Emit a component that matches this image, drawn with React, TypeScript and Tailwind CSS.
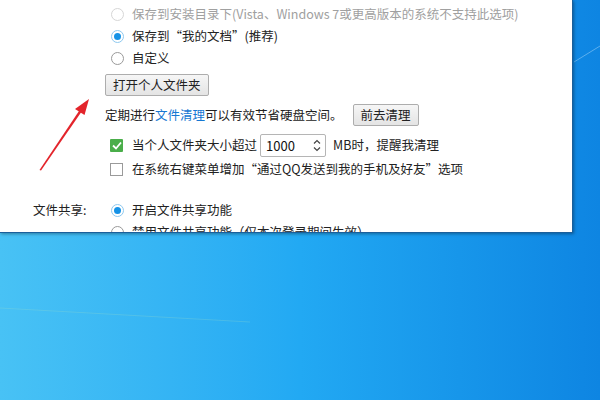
import React from "react";

const font = { fontFamily: '"Noto Sans CJK SC", "Noto Sans", sans-serif' };

function Radio({ checked, disabled }: { checked?: boolean; disabled?: boolean }) {
  return (
    <span
      className={`flex h-[13px] w-[13px] shrink-0 items-center justify-center rounded-full border bg-white ${
        disabled ? "border-[#d6d6d6]" : checked ? "border-[#8ec9ef]" : "border-[#9a9a9a]"
      }`}
    >
      {checked && <span className="h-[7px] w-[7px] rounded-full bg-[#1592e6]" />}
    </span>
  );
}

function Checkbox({ checked }: { checked?: boolean }) {
  if (checked) {
    return (
      <span className="flex h-[13px] w-[13px] shrink-0 items-center justify-center rounded-[1px] bg-[#4aae4a]">
        <svg width="10" height="9" viewBox="0 0 10 9">
          <path d="M1 4.5 L4 7.5 L9 1.5" fill="none" stroke="#fff" strokeWidth="1.8" />
        </svg>
      </span>
    );
  }
  return <span className="h-[13px] w-[13px] shrink-0 border border-[#9a9a9a] bg-white" />;
}

function Btn({ children }: { children: React.ReactNode }) {
  return (
    <button className="h-[22px] rounded-[2px] border border-[#adadad] bg-gradient-to-b from-[#f6f6f6] to-[#e4e4e4] px-[7px] text-[12.5px] leading-none text-[#222]">
      {children}
    </button>
  );
}

function Spinner() {
  return (
    <div className="mx-[3px] flex h-[23px] w-[66px] items-center justify-between rounded-[2px] border border-[#b5b5b5] bg-white pl-[5px] pr-[4px]">
      <span className="text-[13px] text-[#111]">1000</span>
      <svg width="8" height="13" viewBox="0 0 8 13">
        <path d="M1 4.5 L4 1.5 L7 4.5" fill="none" stroke="#444" strokeWidth="1.2" />
        <path d="M1 8.5 L4 11.5 L7 8.5" fill="none" stroke="#444" strokeWidth="1.2" />
      </svg>
    </div>
  );
}

export default function App() {
  return (
    <div
      className="relative h-[400px] w-[600px] overflow-hidden bg-gradient-to-r from-[#48c2f5] via-[#22a9f3] to-[#0e85e2]"
      style={font}
    >
      {/* faint desktop streaks */}
      <svg className="absolute left-0 top-0" width="600" height="400">
        <line x1="0" y1="308" x2="250" y2="322" stroke="#9fe0c8" strokeOpacity="0.25" strokeWidth="1" />
        <line x1="574" y1="62" x2="600" y2="46" stroke="#cfeaff" strokeOpacity="0.4" strokeWidth="1" />
      </svg>

      <div className="relative h-[233px] w-[573px] overflow-hidden border-b border-r border-[#1a5f9c] bg-white text-[12.5px] text-[#222] shadow-[1px_1px_3px_rgba(0,0,0,0.35)]">
        <div className="flex flex-col pt-[3px]">
          <div className="flex h-[22px] items-center gap-[8px] pl-[111px] text-[#a0a0a0]">
            <Radio disabled />
            <span>保存到安装目录下(Vista、Windows 7或更高版本的系统不支持此选项)</span>
          </div>
          <div className="flex h-[22px] items-center gap-[8px] pl-[111px]">
            <Radio checked />
            <span>保存到“我的文档”(推荐)</span>
          </div>
          <div className="flex h-[22px] items-center gap-[8px] pl-[111px]">
            <Radio />
            <span>自定义</span>
          </div>
          <div className="mt-[5px] pl-[105px]">
            <Btn>打开个人文件夹</Btn>
          </div>
          <div className="mt-[8px] flex h-[22px] items-center pl-[105px]">
            <span>
              定期进行<span className="text-[#1677d2]">文件清理</span>可以有效节省硬盘空间。
            </span>
            <span className="ml-[10px]">
              <Btn>前去清理</Btn>
            </span>
          </div>
          <div className="mt-[8px] flex h-[23px] items-center pl-[110px]">
            <Checkbox checked />
            <span className="ml-[9px]">当个人文件夹大小超过</span>
            <Spinner />
            <span className="ml-[4px]">MB时，提醒我清理</span>
          </div>
          <div className="mt-[1px] flex h-[22px] items-center pl-[110px]">
            <Checkbox />
            <span className="ml-[9px]">在系统右键菜单增加“通过QQ发送到我的手机及好友”选项</span>
          </div>
          <div className="mt-[19px] flex h-[22px] items-center">
            <span className="w-[111px] pl-[33px]">文件共享:</span>
            <Radio checked />
            <span className="ml-[8px]">开启文件共享功能</span>
          </div>
          <div className="flex h-[22px] items-center pl-[111px]">
            <Radio />
            <span className="ml-[8px]">禁用文件共享功能（仅本次登录期间生效）</span>
          </div>
        </div>
      </div>

      {/* red annotation arrow */}
      <svg className="absolute left-0 top-0" width="600" height="400">
        <polygon points="39.5,170 41,170.6 82,111 80,109.6" fill="#e3242b" />
        <polygon points="89,99 84.5,115 75,109" fill="#e3242b" />
      </svg>
    </div>
  );
}
